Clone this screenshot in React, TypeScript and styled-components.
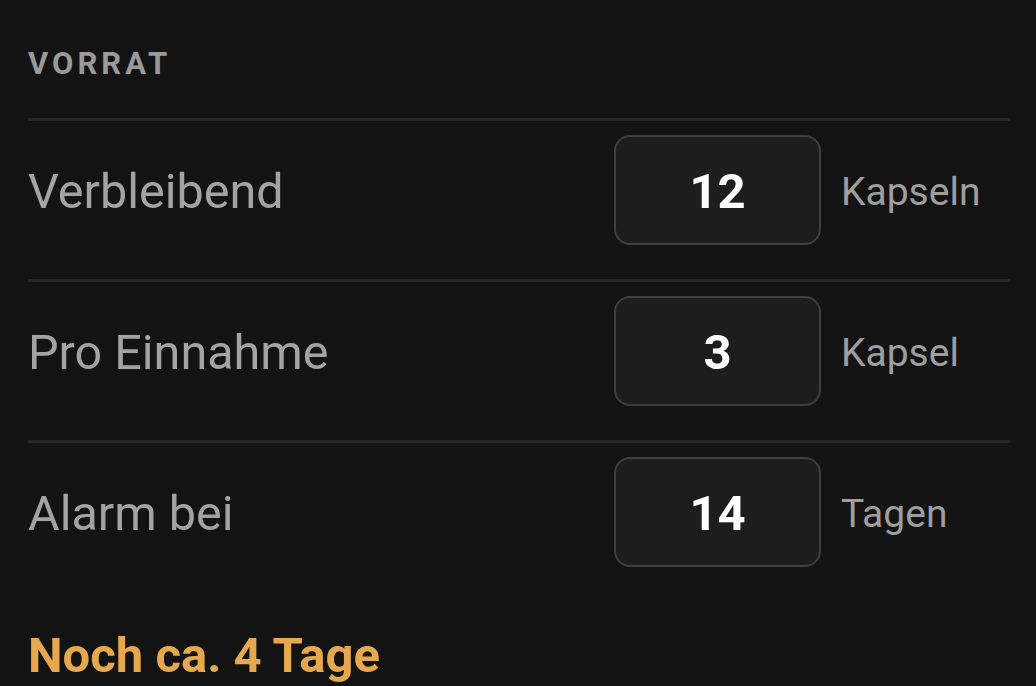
import styled, { createGlobalStyle } from "styled-components";

const GlobalStyle = createGlobalStyle`
  html, body {
    margin: 0;
    padding: 0;
    background: #131313;
  }
  body {
    font-family: Roboto, "Noto Sans", sans-serif;
    -webkit-font-smoothing: antialiased;
  }
`;

type Field = {
  label: string;
  value: string;
  unit: string;
};

const fields: Field[] = [
  { label: "Verbleibend", value: "12", unit: "Kapseln" },
  { label: "Pro Einnahme", value: "3", unit: "Kapsel" },
  { label: "Alarm bei", value: "14", unit: "Tagen" },
];

const App = () => {
  return (
    <>
      <GlobalStyle />
      <Section>
        <SectionTitle>Vorrat</SectionTitle>
        <List>
          {fields.map((f) => (
            <Row key={f.label}>
              <Label>{f.label}</Label>
              <ValueBox>{f.value}</ValueBox>
              <Unit>{f.unit}</Unit>
            </Row>
          ))}
        </List>
        <Estimate>Noch ca. 4 Tage</Estimate>
      </Section>
    </>
  );
};

export default App;

const Section = styled.div`
  width: 1036px;
  height: 686px;
  box-sizing: border-box;
  padding: 46px 26px 0 28px;
  background: #131313;
  overflow: hidden;
`;

const SectionTitle = styled.div`
  color: #9a9a9a;
  font-size: 31px;
  font-weight: 700;
  letter-spacing: 4px;
  text-transform: uppercase;
  line-height: 36px;
  margin-bottom: 36px;
`;

const List = styled.div`
  display: flex;
  flex-direction: column;
`;

const Row = styled.div`
  display: grid;
  grid-template-columns: 1fr 207px 169px;
  column-gap: 20px;
  align-items: center;
  border-top: 3px solid #272727;
  padding: 14px 0 34px;
`;

const Label = styled.div`
  color: #a3a3a3;
  font-size: 48.5px;
  font-weight: 400;
  padding-top: 3px;
`;

const ValueBox = styled.div`
  height: 110px;
  box-sizing: border-box;
  padding-top: 3px;
  border: 2px solid #3f3f3f;
  border-radius: 16px;
  background: #1d1d1d;
  color: #ffffff;
  font-size: 49px;
  font-weight: 700;
  display: flex;
  align-items: center;
  justify-content: center;
`;

const Unit = styled.div`
  color: #9e9e9e;
  font-size: 39px;
  font-weight: 400;
  padding-top: 3px;
`;

const Estimate = styled.div`
  color: #e6a84c;
  font-size: 49px;
  font-weight: 700;
  margin-top: 26px;
`;
